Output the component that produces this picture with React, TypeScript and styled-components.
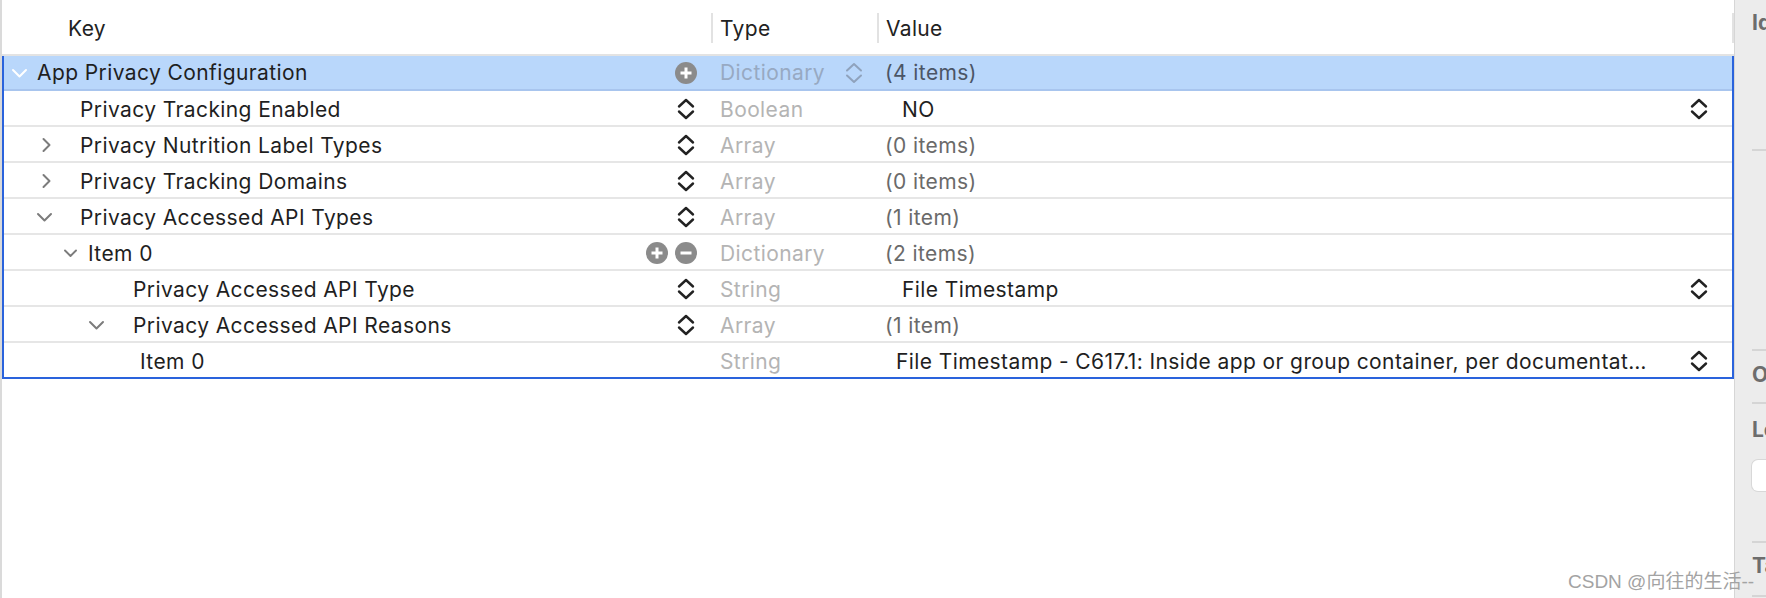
import React from 'react';
import styled, { createGlobalStyle } from 'styled-components';

const GlobalStyle = createGlobalStyle`
  html, body {
    margin: 0;
    padding: 0;
    background: #ffffff;
  }
  body {
    font-family: Inter, "Noto Sans", sans-serif;
    -webkit-font-smoothing: antialiased;
  }
`;

const Window = styled.div`
  position: relative;
  display: flex;
  width: 1766px;
  height: 598px;
  overflow: hidden;
  background: #ffffff;
`;

const Editor = styled.div`
  flex: 1;
  min-width: 0;
  display: flex;
  flex-direction: column;
  border-left: 2px solid #dadada;
`;

const Header = styled.div`
  display: flex;
  align-items: center;
  height: 56px;
  padding-top: 2px;
  box-sizing: border-box;
  border-bottom: 2px solid #e3e3e3;
  font-size: 21px;
  letter-spacing: 0.35px;
  color: #222222;
`;

const HeaderCell = styled.div<{ $width?: number; $divider?: boolean; $pad: number }>`
  display: flex;
  align-items: center;
  height: 30px;
  box-sizing: border-box;
  width: ${(p) => (p.$width ? `${p.$width}px` : 'auto')};
  flex: ${(p) => (p.$width ? 'none' : '1')};
  padding-left: ${(p) => p.$pad}px;
  border-left: ${(p) => (p.$divider ? '2px solid #e2e2e2' : 'none')};
  border-right: ${(p) => (p.$width ? 'none' : '2px solid #e2e2e2')};
`;

const Outline = styled.div`
  display: flex;
  flex-direction: column;
  border: 2px solid #2a63dc;
  border-top: none;
`;

const Row = styled.div<{ $selected?: boolean }>`
  display: grid;
  grid-template-columns: 707px 166px 1fr;
  height: ${(p) => (p.$selected ? 35 : 36)}px;
  padding-top: ${(p) => (p.$selected ? 0 : 2)}px;
  box-sizing: border-box;
  border-bottom: 2px solid ${(p) => (p.$selected ? '#a8c5ee' : '#e6e6e6')};
  background: ${(p) => (p.$selected ? '#b9d7fb' : 'transparent')};
  font-size: 21px;
  letter-spacing: 0.4px;

  &:last-child {
    height: 34px;
    border-bottom: none;
  }
`;

const KeyCell = styled.div<{ $pad: number }>`
  display: flex;
  align-items: center;
  min-width: 0;
  padding-left: ${(p) => p.$pad}px;
  padding-right: 14px;
`;

const ChevronSlot = styled.div<{ $width: number }>`
  flex: none;
  display: flex;
  align-items: center;
  width: ${(p) => p.$width}px;
`;

const KeyLabel = styled.span`
  flex: 1;
  color: #1f1f1f;
  white-space: nowrap;
`;

const Controls = styled.div`
  display: flex;
  align-items: center;
  gap: 7px;
`;

const TypeCell = styled.div<{ $selected?: boolean }>`
  display: flex;
  align-items: center;
  justify-content: space-between;
  padding: 0 12px 0 9px;
  color: ${(p) => (p.$selected ? '#97a9c2' : '#b4b4b4')};
`;

const ValueCell = styled.div<{ $pad: number }>`
  display: flex;
  align-items: center;
  min-width: 0;
  padding-left: ${(p) => p.$pad}px;
  padding-right: 22px;
`;

const ValueText = styled.span<{ $tone: 'count' | 'popup' | 'selected' }>`
  flex: 1;
  min-width: 0;
  margin-right: 40px;
  overflow: hidden;
  white-space: nowrap;
  text-overflow: ellipsis;
  color: ${(p) => (p.$tone === 'popup' ? '#1f1f1f' : p.$tone === 'selected' ? '#4b5566' : '#6a6a6a')};
`;

const Inspector = styled.aside`
  flex: none;
  width: 32px;
  box-sizing: border-box;
  display: flex;
  flex-direction: column;
  padding-left: 17px;
  background: #ececec;
  border-left: 1px solid #d6d6d6;
  overflow: hidden;
`;

const Section = styled.div<{ $height: number; $top: number }>`
  flex: none;
  height: ${(p) => p.$height}px;
  padding-top: ${(p) => p.$top}px;
  box-sizing: border-box;
  border-bottom: 2px solid #d5d5d5;
  display: flex;
  flex-direction: column;
  gap: 17px;
`;

const SectionTitle = styled.div`
  font-size: 21px;
  line-height: 26px;
  font-weight: 700;
  color: #6d6d6d;
  white-space: nowrap;
`;

const LocalizeButton = styled.div`
  width: 140px;
  height: 31px;
  background: #ffffff;
  border-radius: 6px;
  box-shadow: 0 0 0 1px #d8d8d8;
  font-size: 18px;
  line-height: 31px;
  padding-left: 36px;
  color: #333;
  white-space: nowrap;
`;

const Watermark = styled.div`
  position: absolute;
  left: 1568px;
  top: 566px;
  font-family: "Liberation Sans", "Noto Sans CJK SC", sans-serif;
  font-size: 19px;
  color: #a3a3a3;
  white-space: nowrap;
`;

type Chevron = 'right' | 'down' | 'small' | null;
type Control = 'stepper' | 'plus' | 'minus';

interface PlistRow {
  key: string;
  chevron: Chevron;
  chevronX: number;
  labelX: number;
  controls: Control[];
  type: string;
  value: string;
  valueKind: 'count' | 'popup';
  valuePad: number;
  selected?: boolean;
}

const rows: PlistRow[] = [
  { key: 'App Privacy Configuration', chevron: 'down', chevronX: 11, labelX: 37, controls: ['plus'], type: 'Dictionary', value: '(4 items)', valueKind: 'count', valuePad: 8, selected: true },
  { key: 'Privacy Tracking Enabled', chevron: null, chevronX: 80, labelX: 80, controls: ['stepper'], type: 'Boolean', value: 'NO', valueKind: 'popup', valuePad: 25 },
  { key: 'Privacy Nutrition Label Types', chevron: 'right', chevronX: 41, labelX: 80, controls: ['stepper'], type: 'Array', value: '(0 items)', valueKind: 'count', valuePad: 8 },
  { key: 'Privacy Tracking Domains', chevron: 'right', chevronX: 41, labelX: 80, controls: ['stepper'], type: 'Array', value: '(0 items)', valueKind: 'count', valuePad: 8 },
  { key: 'Privacy Accessed API Types', chevron: 'down', chevronX: 36, labelX: 80, controls: ['stepper'], type: 'Array', value: '(1 item)', valueKind: 'count', valuePad: 8 },
  { key: 'Item 0', chevron: 'small', chevronX: 63, labelX: 88, controls: ['plus', 'minus'], type: 'Dictionary', value: '(2 items)', valueKind: 'count', valuePad: 8 },
  { key: 'Privacy Accessed API Type', chevron: null, chevronX: 133, labelX: 133, controls: ['stepper'], type: 'String', value: 'File Timestamp', valueKind: 'popup', valuePad: 25 },
  { key: 'Privacy Accessed API Reasons', chevron: 'down', chevronX: 88, labelX: 133, controls: ['stepper'], type: 'Array', value: '(1 item)', valueKind: 'count', valuePad: 8 },
  { key: 'Item 0', chevron: null, chevronX: 140, labelX: 140, controls: [], type: 'String', value: 'File Timestamp - C617.1: Inside app or group container, per documentation requirements', valueKind: 'popup', valuePad: 19 },
];

const ChevronIcon = ({ kind, light }: { kind: Exclude<Chevron, null>; light?: boolean }) => {
  const stroke = light ? '#ffffff' : '#7c7c7c';
  if (kind === 'right') {
    return (
      <svg width="11" height="16" viewBox="0 0 11 16">
        <path d="M2.5 2 L8.5 8 L2.5 14" fill="none" stroke={stroke} strokeWidth="2" strokeLinecap="round" strokeLinejoin="round" />
      </svg>
    );
  }
  if (kind === 'small') {
    return (
      <svg width="15" height="10" viewBox="0 0 15 10">
        <path d="M2 2.5 L7.5 8 L13 2.5" fill="none" stroke={stroke} strokeWidth="1.9" strokeLinecap="round" strokeLinejoin="round" />
      </svg>
    );
  }
  return (
    <svg width="17" height="10" viewBox="0 0 17 10">
      <path d="M2 2 L8.5 8.5 L15 2" fill="none" stroke={stroke} strokeWidth="2" strokeLinecap="round" strokeLinejoin="round" />
    </svg>
  );
};

const StepperIcon = ({ color = '#222222', width = 2.4 }: { color?: string; width?: number }) => (
  <svg width="22" height="22" viewBox="0 0 22 22">
    <path d="M4 8.5 L11 2 L18 8.5 M4 13.5 L11 20 L18 13.5" fill="none" stroke={color} strokeWidth={width} strokeLinecap="round" strokeLinejoin="round" />
  </svg>
);

const CircleIcon = ({ minus }: { minus?: boolean }) => (
  <svg width="22" height="22" viewBox="0 0 22 22">
    <circle cx="11" cy="11" r="11" fill="#8b8b8b" />
    <path d={minus ? 'M5.5 11 H16.5' : 'M5.5 11 H16.5 M11 5.5 V16.5'} stroke="#ffffff" strokeWidth="3" strokeLinecap="butt" />
  </svg>
);

const ControlIcon = ({ kind }: { kind: Control }) => {
  if (kind === 'stepper') return <StepperIcon />;
  return <CircleIcon minus={kind === 'minus'} />;
};

const PlistRowView = ({ row }: { row: PlistRow }) => {
  const hasChevron = row.chevron !== null;
  const start = hasChevron ? row.chevronX : row.labelX;
  return (
    <Row $selected={row.selected}>
      <KeyCell $pad={start - 4}>
        {row.chevron && (
          <ChevronSlot $width={row.labelX - row.chevronX}>
            <ChevronIcon kind={row.chevron} light={row.selected} />
          </ChevronSlot>
        )}
        <KeyLabel>{row.key}</KeyLabel>
        <Controls>
          {row.controls.map((c, i) => (
            <ControlIcon key={i} kind={c} />
          ))}
        </Controls>
      </KeyCell>
      <TypeCell $selected={row.selected}>
        <span>{row.type}</span>
        {row.selected && <StepperIcon color="#8fa2bc" width={2} />}
      </TypeCell>
      <ValueCell $pad={row.valuePad}>
        <ValueText $tone={row.selected ? 'selected' : row.valueKind}>{row.value}</ValueText>
        {row.valueKind === 'popup' && <StepperIcon />}
      </ValueCell>
    </Row>
  );
};

export default function App() {
  return (
    <Window>
      <GlobalStyle />
      <Editor>
        <Header>
          <HeaderCell $width={709} $pad={66}>Key</HeaderCell>
          <HeaderCell $width={166} $divider $pad={7}>Type</HeaderCell>
          <HeaderCell $divider $pad={7}>Value</HeaderCell>
        </Header>
        <Outline>
          {rows.map((row, i) => (
            <PlistRowView key={i} row={row} />
          ))}
        </Outline>
      </Editor>
      <Inspector>
        <Section $height={151} $top={10}>
          <SectionTitle>Identity and Type</SectionTitle>
        </Section>
        <Section $height={200} $top={0} />
        <Section $height={53} $top={11}>
          <SectionTitle>On Demand Resource Tags</SectionTitle>
        </Section>
        <Section $height={139} $top={13}>
          <SectionTitle>Localization</SectionTitle>
          <LocalizeButton>Localize…</LocalizeButton>
        </Section>
        <Section $height={54} $top={10}>
          <SectionTitle>Target Membership</SectionTitle>
        </Section>
      </Inspector>
      <Watermark>CSDN @向往的生活--</Watermark>
    </Window>
  );
}
